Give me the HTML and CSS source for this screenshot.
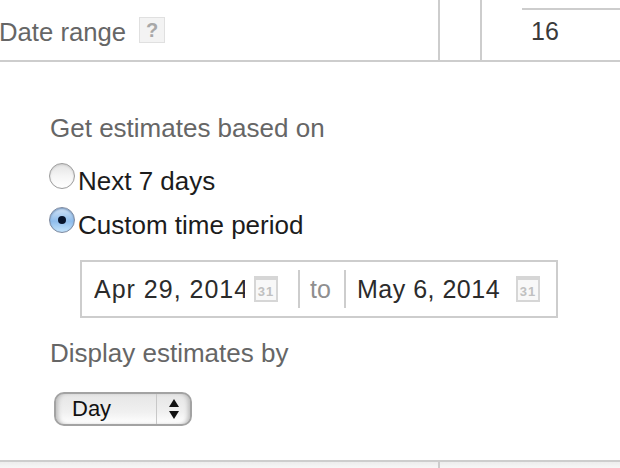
FILE: index.html
```html
<!DOCTYPE html>
<html lang="en">
<head>
    <meta charset="UTF-8">
    <meta name="viewport" content="width=device-width, initial-scale=1.0">
    <title>Date range</title>
    <link rel="stylesheet" href="styles.css">
</head>
<body>
    <div class="top-row">
        <div class="label-cell">
            <span class="label">Date range</span>
            <span class="help">?</span>
        </div>
        <div class="empty-cell"></div>
        <div class="value-cell">
            <div class="value-inner">16</div>
        </div>
    </div>

    <div class="panel">
        <div class="heading">Get estimates based on</div>
        <div class="radio-row">
            <span class="radio"></span>
            <span>Next 7 days</span>
        </div>
        <div class="radio-row radio-row-second">
            <span class="radio checked"></span>
            <span>Custom time period</span>
        </div>

        <div class="dates">
            <div class="date-field date-from">
                <span class="date-text">Apr 29, 2014</span>
                <span class="cal"><span class="cal-num">31</span></span>
            </div>
            <span class="to">to</span>
            <div class="date-field date-until">
                <span class="date-text">May 6, 2014</span>
                <span class="cal"><span class="cal-num">31</span></span>
            </div>
        </div>

        <div class="heading heading-display">Display estimates by</div>
        <div class="select">
            <span class="select-value">Day</span>
            <span class="select-arrows">
                <span class="arrow-up"></span>
                <span class="arrow-down"></span>
            </span>
        </div>
    </div>

    <div class="bottom-row">
        <div class="bottom-left"></div>
        <div class="bottom-right"></div>
    </div>
</body>
</html>
```

FILE: styles.css
```css
html, body {
    height: 100%;
}

body {
    margin: 0;
    overflow: hidden;
    background-color: #fff;
    font-family: "Liberation Sans", Arial, sans-serif;
    font-size: 25px;
    color: #1c1c1c;
}

.top-row {
    display: flex;
    height: 60px;
    border-bottom: 2px solid #cdcdcd;
}

.label-cell {
    display: flex;
    align-items: center;
    width: 438px;
    border-right: 2px solid #cdcdcd;
    color: #666;
}

.label {
    margin-left: -1px;
    font-size: 25.7px;
    padding-top: 4px;
}

.help {
    width: 24px;
    height: 24px;
    margin: 0 0 0 13px;
    border: 1px solid #e0e0e0;
    background-color: #f3f3f3;
    color: #a8a8a8;
    font-size: 20px;
    font-weight: bold;
    line-height: 24px;
    text-align: center;
}

.empty-cell {
    width: 40px;
    border-right: 2px solid #cdcdcd;
}

.value-cell {
    flex: 1;
    padding: 8px 0 0 40px;
}

.value-inner {
    height: 50px;
    padding: 7px 0 0 9px;
    box-sizing: border-box;
    border-top: 2px solid #cdcdcd;
    color: #3a3a3a;
}

.panel {
    height: 398px;
    padding-left: 50px;
    box-sizing: border-box;
}

.heading {
    padding-top: 51px;
    color: #666;
    font-size: 26px;
    line-height: 30px;
}

.radio-row {
    display: flex;
    margin: 23px 0 0 -1px;
    font-size: 26px;
    line-height: 30px;
    height: 30px;
}

.radio-row-second {
    margin-top: 14px;
}

.radio {
    position: relative;
    flex: none;
    width: 24px;
    height: 24px;
    margin: -3px 3px 0 0;
    border: 1px solid #9c9c9c;
    border-radius: 50%;
    background: linear-gradient(#e4e4e4, #f6f6f6 55%, #fff);
    box-shadow: inset 0 1px 2px #ccc;
}

.radio.checked {
    border-color: #7d8aa0;
    background: linear-gradient(#d4e4f6, #8fbdec 55%, #c4e4fc);
    box-shadow: inset 0 1px 2px #6f93bd;
}

/* the dot */
.radio.checked::after {
    content: "";
    position: absolute;
    top: 8px;
    left: 8px;
    width: 8px;
    height: 8px;
    border-radius: 50%;
    background-color: #07142c;
}

.dates {
    display: flex;
    align-items: center;
    width: 478px;
    height: 58px;
    margin: 20px 0 0 30px;
    border: 2px solid #cdcdcd;
    box-sizing: border-box;
}

.date-field {
    display: flex;
    align-items: center;
    height: 38px;
    box-sizing: border-box;
    color: #2b2b2b;
}

.date-from {
    width: 218px;
    padding-left: 12px;
    border-right: 2px solid #cdcdcd;
}

.date-until {
    flex: 1;
    padding-left: 11px;
    border-left: 2px solid #cdcdcd;
}

.date-text {
    letter-spacing: 0.5px;
    white-space: nowrap;
}

.date-from .date-text {
    width: 151px;
    overflow: hidden;
    letter-spacing: 1px;
}

.date-until .date-text {
    width: 159px;
}

.date-from .cal {
    margin-left: 9px;
}

.to {
    width: 44px;
    padding-left: 10px;
    box-sizing: border-box;
    color: #8f8f8f;
}

.cal {
    display: flex;
    flex: none;
    align-items: center;
    justify-content: center;
    width: 24px;
    height: 26px;
    padding-top: 3px;
    box-sizing: border-box;
    border: 2px solid #d6d6d6;
    border-top-width: 4px;
    background-color: #f8f8f8;
}

.cal-num {
    color: #c0c0c0;
    font-size: 13px;
    font-weight: bold;
    letter-spacing: 1px;
}

.heading-display {
    padding-top: 20px;
}

.select {
    display: flex;
    align-items: center;
    width: 138px;
    height: 34px;
    margin: 24px 0 0 4px;
    box-sizing: border-box;
    border: 2px solid #a3a3a3;
    border-radius: 10px;
    background: linear-gradient(#e6e6e6, #f0f0f0 60%, #fff);
    box-shadow: inset 4px 0 4px -2px #bbb, inset -4px 0 4px -2px #bbb;
}

.select-value {
    width: 101px;
    padding-left: 16px;
    box-sizing: border-box;
    border-right: 1px solid #c8c8c8;
    color: #111;
    font-size: 22px;
    line-height: 30px;
}

.select-arrows {
    display: flex;
    flex: 1;
    flex-direction: column;
    align-items: center;
    gap: 4px;
}

.arrow-up, .arrow-down {
    border-left: 5px solid transparent;
    border-right: 5px solid transparent;
}

.arrow-up {
    border-bottom: 8px solid #111;
}

.arrow-down {
    border-top: 8px solid #111;
}

.bottom-row {
    display: flex;
    height: 8px;
    border-top: 2px solid #cdcdcd;
    background: linear-gradient(#ededed, #fafafa);
}

.bottom-left {
    width: 438px;
    border-right: 2px solid #cdcdcd;
}
```
